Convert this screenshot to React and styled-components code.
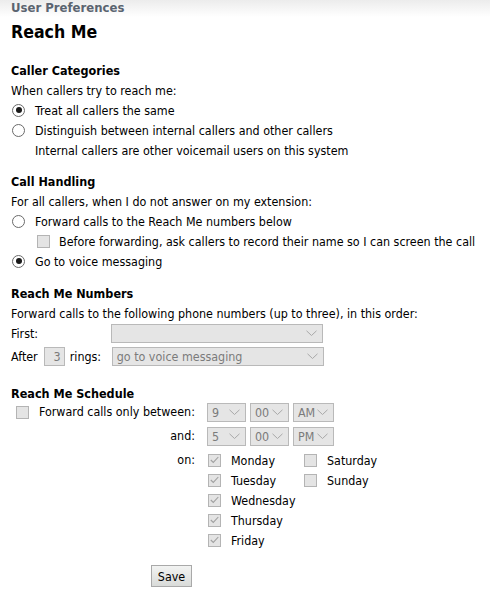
import React from 'react';
import styled, {createGlobalStyle} from 'styled-components';

const GlobalStyle = createGlobalStyle`
  body {
    margin: 0;
    background: #ffffff;
    font-family: "DejaVu Sans Condensed", Tahoma, "DejaVu Sans", sans-serif;
    font-size: 12.4px;
    color: #000;
  }
`

const TopBar = styled.div`
  height: 17px;
  background: linear-gradient(#ececec, #ffffff);
  padding-left: 11px;
  font-weight: bold;
  font-size: 13px;
  color: #5b6470;
  line-height: 16px;
`

const Page = styled.div`
  padding: 0 11px;
`

const Title = styled.h1`
  margin: 5px 0 0;
  font-size: 17.6px;
  line-height: 20px;
  font-weight: bold;
`

const Section = styled.div`
  margin-top: ${p => p.$top || 12}px;
`

const Heading = styled.div`
  font-weight: bold;
  font-size: 12.5px;
  line-height: 20px;
  height: ${p => p.$h || 19}px;
`

const Line = styled.div`
  display: flex;
  align-items: center;
  height: 20px;
  padding-left: ${p => p.$indent || 0}px;
`

const Radio = styled.span`
  width: 13px;
  height: 13px;
  border-radius: 50%;
  border: 1px solid #6a6a6a;
  box-sizing: border-box;
  margin: 0 10px 0 1px;
  display: inline-flex;
  align-items: center;
  justify-content: center;
  background: #fff;
  flex-shrink: 0;
  &::after {
    content: "";
    width: 6px;
    height: 6px;
    border-radius: 50%;
    background: ${p => p.$on ? '#1a1a1a' : 'transparent'};
  }
`

const Box = styled.span`
  width: 13px;
  height: 13px;
  box-sizing: border-box;
  border: 1px solid #b4b4b4;
  background: #e4e4e4;
  display: inline-flex;
  align-items: center;
  justify-content: center;
  margin-left: ${p => p.$left || 0}px;
  margin-right: ${p => p.$right || 10}px;
  flex-shrink: 0;
`

const SelectBox = styled.div`
  width: ${p => p.$w}px;
  height: 19px;
  box-sizing: border-box;
  border: 1px solid #b9b9b9;
  background: #e5e5e5;
  color: #7b7b7b;
  display: flex;
  align-items: center;
  justify-content: space-between;
  padding: 0 5px 0 4px;
  font-size: 12.4px;
`

const Label = styled.span`
  display: inline-block;
  width: ${p => p.$w ? p.$w + 'px' : 'auto'};
  text-align: ${p => p.$right ? 'right' : 'left'};
  flex-shrink: 0;
`

const LeftCell = styled.div`
  width: 184px;
  display: flex;
  align-items: center;
  justify-content: ${p => p.$right ? 'flex-end' : 'flex-start'};
  flex-shrink: 0;
  line-height: 20px;
`

const RingInput = styled.span`
  width: 21px;
  height: 19px;
  box-sizing: border-box;
  border: 1px solid #b9b9b9;
  background: #e5e5e5;
  color: #7b7b7b;
  text-align: right;
  padding-right: 3px;
  line-height: 17px;
  margin: 0 5px 0 6px;
`

const Row = styled.div`
  display: flex;
  align-items: ${p => p.$top ? 'flex-start' : 'center'};
  height: ${p => p.$h || 24}px;
  margin-top: ${p => p.$mt || 0}px;
`

const TimeGroup = styled.div`
  display: flex;
  gap: 4px;
  margin-left: 12px;
`

const DayGrid = styled.div`
  display: grid;
  grid-template-columns: 96px 100px;
  margin-left: 13px;
`

const Day = styled.div`
  display: flex;
  align-items: center;
  height: 20px;
`

const SaveButton = styled.button`
  margin: 15px 0 0 140px;
  width: 41px;
  height: 22px;
  border: 1px solid #a9a9a9;
  background: linear-gradient(#f2f3f2, #d9dbd9);
  font-family: inherit;
  font-size: 12.4px;
  color: #000;
  padding: 0;
`

function Chevron() {
    return (
        <svg width="11" height="7" viewBox="0 0 11 7">
            <path d="M0.5 0.8 L5.5 5.5 L10.5 0.8" fill="none" stroke="#a8a8a8" strokeWidth="1"/>
        </svg>
    )
}

function Tick() {
    return (
        <svg width="9" height="8" viewBox="0 0 9 8">
            <path d="M0.8 4 L3.3 6.4 L8.3 1" fill="none" stroke="#a0a0a0" strokeWidth="1.1"/>
        </svg>
    )
}

function Select({w, value}) {
    return <SelectBox $w={w}><span>{value}</span><Chevron/></SelectBox>
}

const days = [
    ["Monday", true], ["Saturday", false],
    ["Tuesday", true], ["Sunday", false],
    ["Wednesday", true], null,
    ["Thursday", true], null,
    ["Friday", true], null,
]

function App() {
    return (
        <div>
            <GlobalStyle/>
            <TopBar>User Preferences</TopBar>
            <Page>
                <Title>Reach Me</Title>

                <Section $top={19}>
                    <Heading>Caller Categories</Heading>
                    <Line>When callers try to reach me:</Line>
                    <Line><Radio $on/>Treat all callers the same</Line>
                    <Line><Radio/>Distinguish between internal callers and other callers</Line>
                    <Line $indent={24}>Internal callers are other voicemail users on this system</Line>
                </Section>

                <Section>
                    <Heading>Call Handling</Heading>
                    <Line>For all callers, when I do not answer on my extension:</Line>
                    <Line><Radio/>Forward calls to the Reach Me numbers below</Line>
                    <Line $indent={26}><Box $right={9}/>Before forwarding, ask callers to record their name so I can screen the call</Line>
                    <Line><Radio $on/>Go to voice messaging</Line>
                </Section>

                <Section $top={13}>
                    <Heading>Reach Me Numbers</Heading>
                    <Line>Forward calls to the following phone numbers (up to three), in this order:</Line>
                    <Row $h={21}>
                        <Label $w={100}>First:</Label>
                        <Select w={212} value=""/>
                    </Row>
                    <Row $h={25}>
                        <Label>After</Label>
                        <RingInput>3</RingInput>
                        <Label $w={42}>rings:</Label>
                        <Select w={212} value="go to voice messaging"/>
                    </Row>
                </Section>

                <Section $top={15}>
                    <Heading $h={16}>Reach Me Schedule</Heading>
                    <Row>
                        <LeftCell>
                            <Box $left={5} $right={10}/>
                            <Label>Forward calls only between:</Label>
                        </LeftCell>
                        <TimeGroup>
                            <Select w={39} value="9"/>
                            <Select w={39} value="00"/>
                            <Select w={41} value="AM"/>
                        </TimeGroup>
                    </Row>
                    <Row>
                        <LeftCell $right>and:</LeftCell>
                        <TimeGroup>
                            <Select w={39} value="5"/>
                            <Select w={39} value="00"/>
                            <Select w={41} value="PM"/>
                        </TimeGroup>
                    </Row>
                    <Row $h={100} $top $mt={2}>
                        <LeftCell $right>on:</LeftCell>
                        <DayGrid>
                            {days.map((d, i) => d ? (
                                <Day key={i}><Box $right={10}>{d[1] && <Tick/>}</Box>{d[0]}</Day>
                            ) : <span key={i}/>)}
                        </DayGrid>
                    </Row>
                </Section>

                <SaveButton>Save</SaveButton>
            </Page>
        </div>
    );
}

export default App;
